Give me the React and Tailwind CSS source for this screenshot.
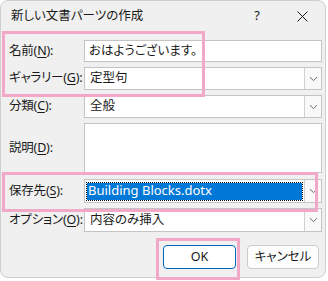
import React from 'react';

const font = "font-['Noto_Sans','Noto_Sans_CJK_JP',sans-serif] [font-feature-settings:'palt']";

const Label = ({ text, k }) => (
  <div className="w-[83px] shrink-0 pl-[8px] text-[12.5px] text-[#1a1a1a] whitespace-nowrap tracking-[-0.2px]">
    {text}(<span className="underline underline-offset-2">{k}</span>):
  </div>
);

const Chevron = () => (
  <svg width="9" height="6" viewBox="0 0 9 6" fill="none">
    <path d="M1 1.2 L4.5 4.6 L8 1.2" stroke="#6b6b6b" strokeWidth="1" />
  </svg>
);

const Combo = ({ value, selected, h = 'h-[23px]' }) => (
  <div className={`flex w-[238px] shrink-0 ${h} bg-white border border-[#c4c4c4]`}>
    <div className="flex-1 flex items-center px-[2px]">
      {selected ? (
        <div className="w-full h-[17px] flex items-center bg-[#0078d7] text-white outline outline-1 outline-dotted outline-[#0a0a0a] px-[1px] text-[13px]">
          {value}
        </div>
      ) : (
        <span className="pl-[3px] text-[12.5px] text-[#1a1a1a]">{value}</span>
      )}
    </div>
    <div className="w-[17px] flex items-center justify-center bg-[#f9f9f9] border-l border-[#d0d0d0]">
      <Chevron />
    </div>
  </div>
);

export default function App() {
  return (
    <div className={`w-[328px] h-[281px] bg-white relative ${font}`}>
      <div className="w-[326px] h-[278px] bg-[#f0f0f0] border border-[#cfcfcf] rounded-[8px] flex flex-col">
        <div className="h-[30px] flex items-center pl-[10px] pr-[17px] text-[12.5px] text-[#1a1a1a]">
          <span>新しい文書パーツの作成</span>
          <span className="ml-auto mr-[37px] text-[13px]">?</span>
          <svg width="11" height="11" viewBox="0 0 11 11">
            <path d="M0.5 0.5 L10.5 10.5 M10.5 0.5 L0.5 10.5" stroke="#1a1a1a" strokeWidth="1" />
          </svg>
        </div>

        <div className="flex flex-col gap-[5px] mt-[9px]">
          <div className="flex items-center">
            <Label text="名前" k="N" />
            <div className="w-[238px] shrink-0 h-[22px] bg-white border border-[#c4c4c4] flex items-center pl-[4px] text-[12.5px] text-[#1a1a1a]">
              おはようございます。
            </div>
          </div>
          <div className="flex items-center">
            <Label text="ギャラリー" k="G" />
            <Combo value="定型句" />
          </div>
          <div className="flex items-center">
            <Label text="分類" k="C" />
            <Combo value="全般" />
          </div>
          <div className="flex items-center">
            <Label text="説明" k="D" />
            <div className="w-[238px] shrink-0 h-[50px] bg-white border border-[#c4c4c4]" />
          </div>
          <div className="flex items-center mt-[1px]">
            <Label text="保存先" k="S" />
            <Combo value="Building Blocks.dotx" selected h="h-[24px]" />
          </div>
          <div className="flex items-center">
            <Label text="オプション" k="O" />
            <Combo value="内容のみ挿入" h="h-[24px]" />
          </div>
        </div>

        <div className="flex justify-end gap-[11px] pr-[6px] mt-[13px]">
          <button className="w-[73px] h-[24px] bg-white border border-[#0067c0] rounded-[4px] text-[12.5px] text-[#1a1a1a]">OK</button>
          <button className="w-[72px] h-[24px] bg-[#fdfdfd] border border-[#cccccc] rounded-[4px] text-[12.5px] text-[#1a1a1a]">キャンセル</button>
        </div>
      </div>

      <div className="absolute left-[2px] top-[31px] w-[203px] h-[66px] border-[3px] border-[#f2a9c8] pointer-events-none" />
      <div className="absolute left-[2px] top-[172px] w-[316px] h-[40px] border-[3px] border-[#f2a9c8] pointer-events-none" />
      <div className="absolute left-[156px] top-[238px] w-[84px] h-[42px] border-[3px] border-[#f2a9c8] pointer-events-none" />
    </div>
  );
}
